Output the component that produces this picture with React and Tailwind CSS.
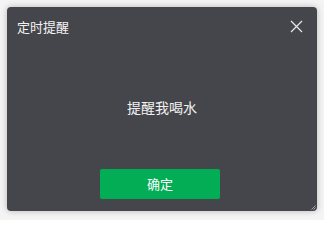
export default function App() {
  return (
    <div
      className="w-[324px] h-[220px] bg-[#f4f4f4] pl-[7px] pt-[7px]"
      style={{ fontFamily: '"Noto Sans CJK SC", "Noto Sans", sans-serif' }}
    >
      <div className="relative w-[310px] h-[204px] bg-[#45464b] rounded-[4px] shadow-[0_0_6px_rgba(0,0,0,0.25)] flex flex-col">
        {/* Header */}
        <div className="h-[38px] flex items-center justify-between pl-[10px] pr-[14px]">
          <span className="text-[13px] text-[#f2f2f2] leading-none">定时提醒</span>
          <svg width="13" height="13" viewBox="0 0 13 13" className="text-[#e8e8e8]">
            <path d="M1 1 L12 12 M12 1 L1 12" stroke="currentColor" strokeWidth="1.2" fill="none" />
          </svg>
        </div>

        {/* Message */}
        <div className="flex-1 flex items-center justify-center">
          <span className="text-[14px] text-[#f2f2f2] leading-none">提醒我喝水</span>
        </div>

        {/* Action */}
        <div className="flex pl-[93px] pb-[12px]">
          <button className="w-[120px] h-[30px] bg-[#03ad55] rounded-[2px] text-[13px] text-white">
            确定
          </button>
        </div>

        {/* resize grip */}
        <svg width="5" height="5" viewBox="0 0 5 5" className="absolute right-[1px] bottom-[1px] text-[#bbbbbb]">
          <path d="M4.5 0.5 L0.5 4.5 M4.5 2.5 L2.5 4.5" stroke="currentColor" strokeWidth="0.8" fill="none" />
        </svg>
      </div>
    </div>
  )
}
